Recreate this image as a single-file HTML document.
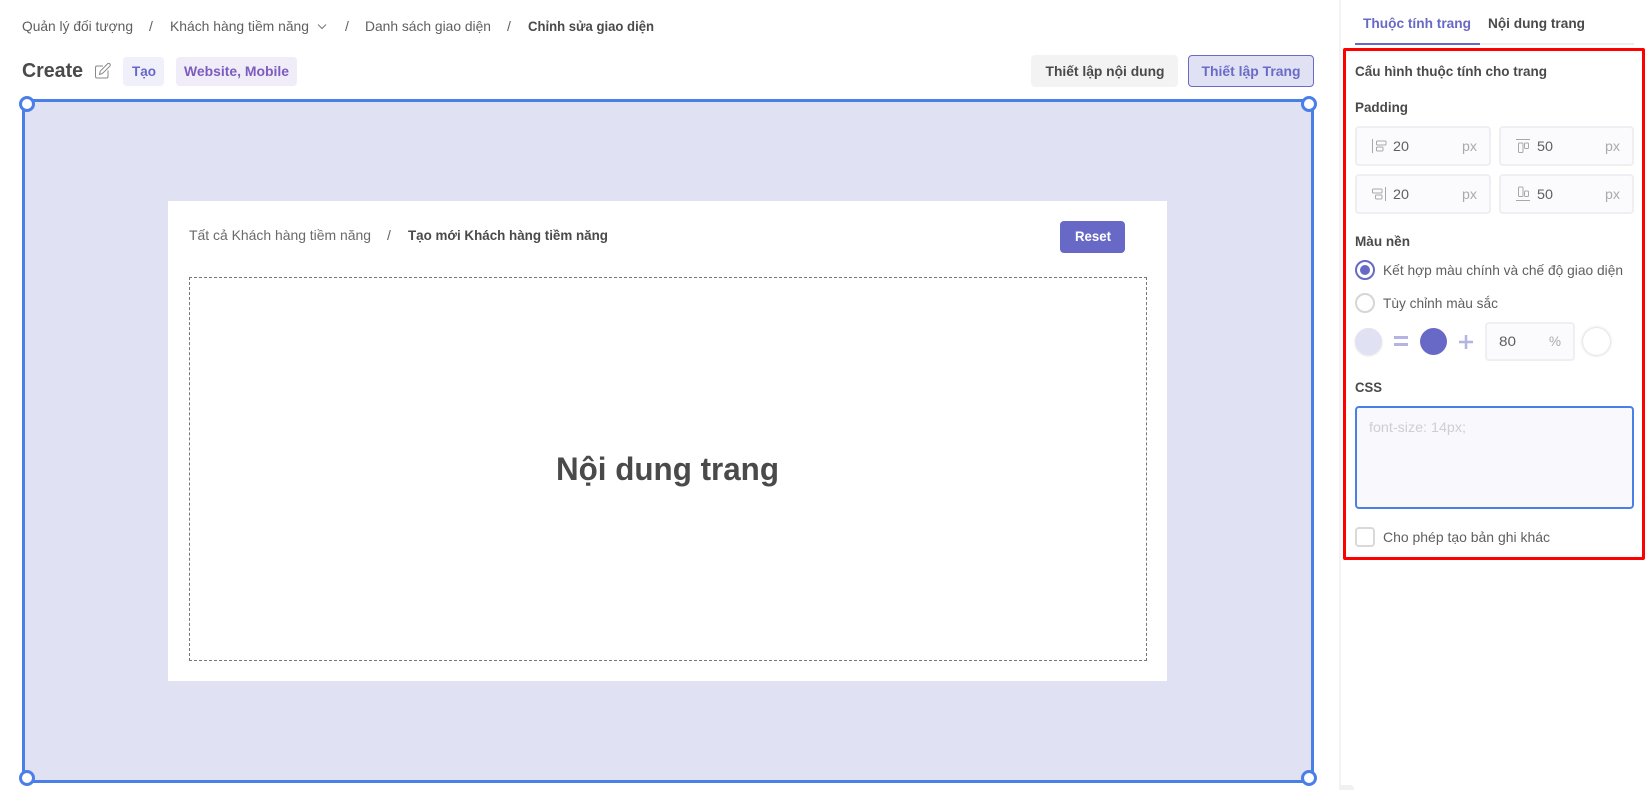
<!DOCTYPE html>
<html lang="vi">
<head>
<meta charset="utf-8">
<title>Chỉnh sửa giao diện</title>
<style>
html,body{margin:0;padding:0;background:#fff;width:1649px;height:790px;overflow:hidden}
body{position:relative;font-family:"Liberation Sans","Noto Sans CJK JP",sans-serif}
.b{position:absolute;box-sizing:border-box}
.in{background:#fbfbfe;border:2px solid #eeeff3;border-radius:4px}
.h{position:absolute;box-sizing:border-box;width:16px;height:16px;border:3px solid #4a7fe8;border-radius:50%;background:#fff}
.c{border-radius:50%}
svg{position:absolute;left:0;top:0}
text{font-family:"Liberation Sans","Noto Sans CJK JP",sans-serif;font-size:14px;fill:#5f5f5f}
.s{font-weight:700;fill:#4a4a4a}
</style>
</head>
<body>
<!-- tags / buttons -->
<div class="b" style="left:123px;top:57px;width:41px;height:29px;background:#f0f0fa;border-radius:4px"></div>
<div class="b" style="left:176px;top:57px;width:121px;height:29px;background:#f0ecf8;border-radius:4px"></div>
<div class="b" style="left:1031px;top:55px;width:147px;height:32px;background:#f3f3f3;border-radius:4px"></div>
<div class="b" style="left:1188px;top:55px;width:126px;height:32px;background:#e0e1f2;border:1px solid #6a6bc9;border-radius:4px"></div>
<!-- canvas -->
<div class="b" style="left:22px;top:99px;width:1292px;height:684px;background:#e0e1f2;border:3px solid #4a7fe8"></div>
<div class="h" style="left:19px;top:96px"></div>
<div class="h" style="left:1301px;top:96px"></div>
<div class="h" style="left:19px;top:770px"></div>
<div class="h" style="left:1301px;top:770px"></div>
<div class="b" style="left:168px;top:201px;width:999px;height:480px;background:#fff"></div>
<div class="b" style="left:1060px;top:221px;width:65px;height:32px;background:#6869c6;border-radius:4px"></div>
<div class="b" style="left:189px;top:277px;width:958px;height:384px;border:1px dashed #777"></div>
<!-- right panel -->
<div class="b" style="left:1339px;top:0;width:2px;height:790px;background:#f3f3f3"></div>
<div class="b" style="left:1339px;top:785px;width:15px;height:5px;background:#f1f1f1;border-radius:0 4px 0 0"></div>
<div class="b" style="left:1355px;top:43px;width:279px;height:2px;background:#eeeeee"></div>
<div class="b" style="left:1355px;top:43px;width:125px;height:2px;background:#6869c6"></div>
<div class="b" style="left:1342.500px;top:48px;width:302.500px;height:512px;border:3.500px solid #ff0000;border-radius:2px"></div>
<div class="b in" style="left:1355px;top:126px;width:136px;height:40px"></div>
<div class="b in" style="left:1499px;top:126px;width:135px;height:40px"></div>
<div class="b in" style="left:1355px;top:174px;width:136px;height:40px"></div>
<div class="b in" style="left:1499px;top:174px;width:135px;height:40px"></div>
<div class="b c" style="left:1355px;top:260px;width:20px;height:20px;border:2px solid #6869c6"></div>
<div class="b c" style="left:1360px;top:265px;width:10px;height:10px;background:#6869c6"></div>
<div class="b c" style="left:1355px;top:293px;width:20px;height:20px;border:2px solid #d6d6d6"></div>
<div class="b c" style="left:1355px;top:328px;width:27px;height:27px;background:#e0e1f2;box-shadow:0 1px 2px rgba(0,0,0,.12)"></div>
<div class="b c" style="left:1420px;top:328px;width:27px;height:27px;background:#6869c6"></div>
<div class="b in" style="left:1485px;top:322px;width:90px;height:39px"></div>
<div class="b c" style="left:1583px;top:328px;width:27px;height:27px;background:#fff;box-shadow:0 0 3px rgba(0,0,0,.25)"></div>
<div class="b" style="left:1355px;top:406px;width:279px;height:103px;background:#f8f8fd;border:2px solid #4a7fe8;border-radius:4px"></div>
<div class="b" style="left:1355px;top:527px;width:20px;height:20px;border:2px solid #d9d9d9;border-radius:4px;background:#fff"></div>

<svg width="1649" height="790" viewBox="0 0 1649 790" xmlns="http://www.w3.org/2000/svg">
  <!-- breadcrumb -->
  <text x="22" y="31" textLength="111" lengthAdjust="spacingAndGlyphs">Quản lý đối tượng</text>
  <text x="149" y="31">/</text>
  <text x="170" y="31" textLength="139" lengthAdjust="spacingAndGlyphs">Khách hàng tiềm năng</text>
  <path d="M318 24.500l4 4 4-4" fill="none" stroke="#777" stroke-width="1"/>
  <text x="345" y="31">/</text>
  <text x="365" y="31" textLength="126" lengthAdjust="spacingAndGlyphs">Danh sách giao diện</text>
  <text x="507" y="31">/</text>
  <text class="s" x="528" y="31" textLength="126" lengthAdjust="spacingAndGlyphs">Chỉnh sửa giao diện</text>

  <!-- title row -->
  <text class="s" x="22" y="77" style="font-size:20px" textLength="61" lengthAdjust="spacingAndGlyphs">Create</text>
  <g fill="none" stroke="#888" stroke-width="1">
    <path d="M103 66h-6a1.500 1.500 0 0 0-1.500 1.500v9a1.500 1.500 0 0 0 1.500 1.500h9.500a1.500 1.500 0 0 0 1.500-1.500v-6"/>
    <path d="M99.500 74.500l.7-3.300 7.300-7.300a1.500 1.500 0 0 1 2.300 2.300l-7.300 7.300z"/>
  </g>
  <text x="132" y="76" style="fill:#6768c5;font-weight:700;font-size:13.500px" textLength="24" lengthAdjust="spacingAndGlyphs">Tạo</text>
  <text x="184" y="76" style="fill:#7c5cbf;font-weight:700;font-size:13.500px" textLength="105" lengthAdjust="spacingAndGlyphs">Website, Mobile</text>
  <text class="s" x="1045.500" y="76" textLength="119" lengthAdjust="spacingAndGlyphs">Thiết lập nội dung</text>
  <text x="1201.500" y="76" style="fill:#6a6bc9;font-weight:700" textLength="99" lengthAdjust="spacingAndGlyphs">Thiết lập Trang</text>

  <!-- inner card -->
  <text x="189" y="240" style="fill:#6a6a6a" textLength="182" lengthAdjust="spacingAndGlyphs">Tất cả Khách hàng tiềm năng</text>
  <text x="387" y="240">/</text>
  <text class="s" x="408" y="240" textLength="200" lengthAdjust="spacingAndGlyphs">Tạo mới Khách hàng tiềm năng</text>
  <text x="1075" y="241" style="fill:#fff;font-weight:700" textLength="36" lengthAdjust="spacingAndGlyphs">Reset</text>
  <text class="s" x="556" y="480" style="font-size:32px" textLength="223" lengthAdjust="spacingAndGlyphs">Nội dung trang</text>

  <!-- tabs -->
  <text x="1363" y="28" style="fill:#6869c6;font-weight:700" textLength="108" lengthAdjust="spacingAndGlyphs">Thuộc tính trang</text>
  <text class="s" x="1488" y="28" textLength="97" lengthAdjust="spacingAndGlyphs">Nội dung trang</text>

  <!-- form labels -->
  <text class="s" x="1355" y="76" textLength="192" lengthAdjust="spacingAndGlyphs">Cấu hình thuộc tính cho trang</text>
  <text class="s" x="1355" y="112" textLength="53" lengthAdjust="spacingAndGlyphs">Padding</text>

  <!-- padding icons -->
  <g fill="none" stroke="#a8a8a8" stroke-width="1">
    <path d="M1372.500 139v14"/>
    <rect x="1376.500" y="141" width="9.500" height="4" rx="1"/>
    <rect x="1376.500" y="147" width="6.500" height="4" rx="1"/>
    <path d="M1516 139.500h14"/>
    <rect x="1518.500" y="143" width="4.500" height="9.500" rx="1"/>
    <rect x="1524.500" y="143" width="4" height="5.500" rx="1"/>
    <path d="M1385.500 187v14"/>
    <rect x="1372.500" y="189" width="9.500" height="4" rx="1"/>
    <rect x="1375.500" y="195" width="6.500" height="4" rx="1"/>
    <path d="M1516 200.500h14"/>
    <rect x="1518.500" y="187" width="4.500" height="9.500" rx="1"/>
    <rect x="1524.500" y="191" width="4" height="5.500" rx="1"/>
  </g>
  <text x="1393" y="151" textLength="16" lengthAdjust="spacingAndGlyphs">20</text>
  <text x="1537" y="151" textLength="16" lengthAdjust="spacingAndGlyphs">50</text>
  <text x="1393" y="199" textLength="16" lengthAdjust="spacingAndGlyphs">20</text>
  <text x="1537" y="199" textLength="16" lengthAdjust="spacingAndGlyphs">50</text>
  <text x="1462" y="151" style="fill:#aaa" textLength="15" lengthAdjust="spacingAndGlyphs">px</text>
  <text x="1605" y="151" style="fill:#aaa" textLength="15" lengthAdjust="spacingAndGlyphs">px</text>
  <text x="1462" y="199" style="fill:#aaa" textLength="15" lengthAdjust="spacingAndGlyphs">px</text>
  <text x="1605" y="199" style="fill:#aaa" textLength="15" lengthAdjust="spacingAndGlyphs">px</text>

  <!-- colour -->
  <text class="s" x="1355" y="246" textLength="55" lengthAdjust="spacingAndGlyphs">Màu nền</text>
  <text x="1383" y="275" textLength="240" lengthAdjust="spacingAndGlyphs">Kết hợp màu chính và chế độ giao diện</text>
  <text x="1383" y="308" textLength="115" lengthAdjust="spacingAndGlyphs">Tùy chỉnh màu sắc</text>
  <path d="M1394 337.500h14M1394 344.500h14" stroke="#b3b4e3" stroke-width="3" fill="none"/>
  <path d="M1459 342h14M1466 335v14" stroke="#b3b4e3" stroke-width="2.500" fill="none"/>
  <text x="1499" y="346" textLength="17" lengthAdjust="spacingAndGlyphs">80</text>
  <text x="1549" y="346" style="fill:#aaa" textLength="12" lengthAdjust="spacingAndGlyphs">%</text>

  <!-- css -->
  <text class="s" x="1355" y="392" textLength="27" lengthAdjust="spacingAndGlyphs">CSS</text>
  <text x="1369" y="432" style="fill:#cfcfcf" textLength="97" lengthAdjust="spacingAndGlyphs">font-size: 14px;</text>
  <text x="1383" y="542" textLength="167" lengthAdjust="spacingAndGlyphs">Cho phép tạo bản ghi khác</text>
</svg>
</body>
</html>
